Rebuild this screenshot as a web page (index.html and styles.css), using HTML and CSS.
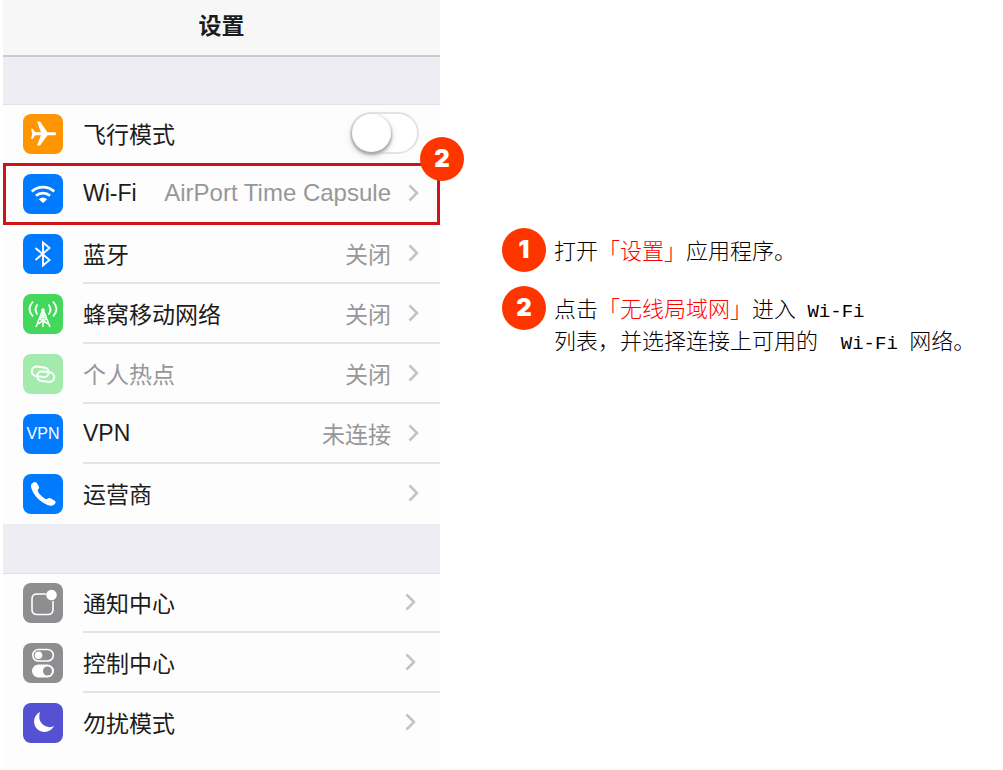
FILE: index.html
```html
<!DOCTYPE html>
<html lang="zh-CN">
<head>
<meta charset="utf-8">
<meta name="viewport" content="width=device-width, initial-scale=1">
<title>设置</title>
<link rel="stylesheet" href="styles.css">
</head>
<body>
<main class="page">
  <section class="phone">
    <header class="titlebar"><h1 class="title">设置</h1></header>
    <ul class="group">
      <li class="row">
        <svg class="icon orange" viewBox="0 0 40 40" aria-hidden="true"><path fill="#fff" d="M32.500 18.300H24.500L17 7.500H14L18 18.300H12.200L9.800 14.800H8L9.200 19.700L8 24.800H9.800L12.200 21.300H18L14 31.500H17L24.500 21.300H32.500Q34 19.800 32.500 18.300Z"/></svg>
        <div class="cell plain">
          <label class="name" for="airplane">飞行模式</label>
          <input class="toggle" type="checkbox" role="switch" id="airplane">
        </div>
      </li>
      <li class="row marked">
        <svg class="icon blue" viewBox="0 0 40 40" aria-hidden="true"><g fill="none" stroke="#fff" stroke-width="2.800"><path d="M8.800 17.600A16 16 0 0 1 31.200 17.600"/><path d="M13 21.700A10.500 10.500 0 0 1 27 21.700"/></g><path fill="#fff" d="M15.800 25.200Q20 22 24.200 25.200L20 29Z"/></svg>
        <a class="cell plain" href="#wifi">
          <span class="name">Wi-Fi</span><span class="value latin">AirPort Time Capsule</span>
          <svg class="chevron" viewBox="0 0 11 18" aria-hidden="true"><path d="M1.500 1.500L9 9L1.500 16.500"/></svg>
        </a>
        <span class="badge pinned">2</span>
      </li>
      <li class="row">
        <svg class="icon blue" viewBox="0 0 40 40" aria-hidden="true"><path fill="none" stroke="#fff" stroke-width="1.900" d="M12.500 14L26.500 26L20 31.500V8.500L26.500 14L12.500 26"/></svg>
        <a class="cell" href="#bluetooth">
          <span class="name">蓝牙</span><span class="value">关闭</span>
          <svg class="chevron" viewBox="0 0 11 18" aria-hidden="true"><path d="M1.500 1.500L9 9L1.500 16.500"/></svg>
        </a>
      </li>
      <li class="row">
        <svg class="icon green" viewBox="0 0 40 40" aria-hidden="true"><g fill="none" stroke="#fff" stroke-width="1.500"><path d="M20 15L13 33M20 15L27 33M18 20.500L23.500 25L14.500 30M22 20.500L16.500 25L25.500 30M20 15V33"/><path d="M14.500 10.500Q10.500 15.500 14.500 20.500M25.500 10.500Q29.500 15.500 25.500 20.500" stroke-width="1.800"/><path d="M10 7.500Q3 15 10 22.500M30 7.500Q37 15 30 22.500" stroke-width="1.800"/></g><circle cx="20" cy="16" r="1.800" fill="#fff"/></svg>
        <a class="cell" href="#cellular">
          <span class="name">蜂窝移动网络</span><span class="value">关闭</span>
          <svg class="chevron" viewBox="0 0 11 18" aria-hidden="true"><path d="M1.500 1.500L9 9L1.500 16.500"/></svg>
        </a>
      </li>
      <li class="row">
        <svg class="icon pale" viewBox="0 0 40 40" aria-hidden="true"><g fill="none" stroke="#f4fff5" stroke-width="2.200" transform="rotate(8 20 20)"><rect x="8.500" y="13.500" width="17" height="9.500" rx="4.750"/><rect x="14.500" y="17.500" width="17" height="9.500" rx="4.750"/></g></svg>
        <a class="cell" href="#hotspot">
          <span class="name dim">个人热点</span><span class="value">关闭</span>
          <svg class="chevron" viewBox="0 0 11 18" aria-hidden="true"><path d="M1.500 1.500L9 9L1.500 16.500"/></svg>
        </a>
      </li>
      <li class="row">
        <span class="icon blue vpn">VPN</span>
        <a class="cell" href="#vpn">
          <span class="name">VPN</span><span class="value">未连接</span>
          <svg class="chevron" viewBox="0 0 11 18" aria-hidden="true"><path d="M1.500 1.500L9 9L1.500 16.500"/></svg>
        </a>
      </li>
      <li class="row">
        <svg class="icon blue" viewBox="0 0 40 40" aria-hidden="true"><path fill="#fff" d="M9 9.500Q11.500 6.700 13.800 9L16 12.700Q16.700 14.300 14.800 16Q14.300 18 18.300 21.700Q22.300 25.400 24.200 25Q25.800 23.500 27.500 24.300L31.800 26.800Q33.700 28.300 31.300 30.600Q28.800 32.800 24.500 31Q17.500 28 12.500 22Q8 15.800 8 11.500Q8 10.500 9 9.500Z"/></svg>
        <a class="cell" href="#carrier">
          <span class="name">运营商</span>
          <svg class="chevron" viewBox="0 0 11 18" aria-hidden="true"><path d="M1.500 1.500L9 9L1.500 16.500"/></svg>
        </a>
      </li>
    </ul>
    <ul class="group second">
      <li class="row">
        <svg class="icon gray" viewBox="0 0 40 40" aria-hidden="true"><path fill="none" stroke="#fff" stroke-width="1.600" d="M23 11H14Q9 11 9 16V26.500Q9 31.500 14 31.500H25Q30 31.500 30 26.500V18"/><circle cx="28.500" cy="12" r="5.300" fill="#fff"/></svg>
        <a class="cell" href="#notifications">
          <span class="name">通知中心</span>
          <svg class="chevron" viewBox="0 0 11 18" aria-hidden="true"><path d="M1.500 1.500L9 9L1.500 16.500"/></svg>
        </a>
      </li>
      <li class="row">
        <svg class="icon gray" viewBox="0 0 40 40" aria-hidden="true"><rect x="9.800" y="6.500" width="20.500" height="11.500" rx="5.750" fill="none" stroke="#fff" stroke-width="1.600"/><circle cx="15.500" cy="12.200" r="3.800" fill="#fff"/><rect x="9" y="21.500" width="22" height="13" rx="6.500" fill="#fff"/><circle cx="24.500" cy="28" r="4.500" fill="#8e8e93"/></svg>
        <a class="cell" href="#control">
          <span class="name">控制中心</span>
          <svg class="chevron" viewBox="0 0 11 18" aria-hidden="true"><path d="M1.500 1.500L9 9L1.500 16.500"/></svg>
        </a>
      </li>
      <li class="row">
        <svg class="icon purple" viewBox="0 0 40 40" aria-hidden="true"><path fill="#fff" d="M17 9A10.500 10.500 0 1 0 31 23Q24.500 26 19.500 21.300Q14.500 16 17 9Z"/></svg>
        <a class="cell" href="#dnd">
          <span class="name">勿扰模式</span>
          <svg class="chevron" viewBox="0 0 11 18" aria-hidden="true"><path d="M1.500 1.500L9 9L1.500 16.500"/></svg>
        </a>
      </li>
    </ul>
  </section>
  <section class="steps">
    <div class="step"><span class="badge">1</span><p class="text">打开<em class="key">「设置」</em>应用程序。</p></div>
    <div class="step"><span class="badge">2</span><p class="text">点击<em class="key">「无线局域网」</em>进入<span class="mono"> Wi-Fi</span><br>列表，并选择连接上可用的<span class="mono">&nbsp; Wi-Fi </span>网络。</p></div>
  </section>
</main>
</body>
</html>
```
FILE: styles.css
```css
* { box-sizing: border-box; }

body {
  margin: 0;
  background: #fff;
  color: #1c1c1c;
  font-family: "Liberation Sans", "Noto Sans CJK SC", sans-serif;
  font-size: 23px;
}

.page {
  display: grid;
  grid-template-columns: minmax(0, 437px) minmax(0, 1fr);
  column-gap: 62px;
  min-height: 100vh;
  padding-left: 3px;
}

.phone { background: #fdfdfd; }

.titlebar {
  height: 57px;
  background: #f7f7f7;
  border-bottom: 2px solid #cbcbcf;
  text-align: center;
}

.title {
  margin: 0;
  font-size: 23px;
  line-height: 53px;
}

.group {
  margin: 0;
  padding: 0;
  list-style: none;
  border-top: 47px solid #eeedf3;
}

.second { border-top-width: 49px; }

.row {
  position: relative;
  display: flex;
  align-items: center;
  gap: 20px;
  height: 60px;
  padding-left: 20px;
}

.group .row:first-child { box-shadow: inset 0 1px #e0e0e4; }

.icon {
  flex: none;
  width: 40px;
  height: 40px;
  border-radius: 8px;
}

.orange { background: #ff9500; }
.blue { background: #007aff; }
.green { background: #43d85c; }
.pale { background: #a3eaad; }
.gray { background: #8e8e91; }
.purple { background: #5551d3; }

.vpn {
  color: #fff;
  font-size: 16px;
  line-height: 40px;
  text-align: center;
}

.cell {
  flex: 1;
  display: flex;
  align-items: center;
  height: 60px;
  padding-right: 21px;
  border-bottom: 2px solid #e4e4e6;
  color: inherit;
  text-decoration: none;
}

.second .cell { padding-right: 24px; }
.cell.plain, .row:last-child .cell { border-bottom-color: transparent; }

.name { flex: 1; white-space: nowrap; }
.dim, .value { color: #97979a; }
.value { white-space: nowrap; }
.latin { font-size: 24px; }

.chevron {
  flex: none;
  width: 11px;
  height: 18px;
  margin-left: 17px;
  fill: none;
  stroke: #c3c3c6;
  stroke-width: 2.5;
}

.toggle {
  appearance: none;
  width: 69px;
  height: 42px;
  margin: 0;
  border: 2px solid #e3e3e3;
  border-radius: 21px;
  background: #fff;
}

.toggle::before {
  content: "";
  display: block;
  width: 39px;
  height: 38px;
  border-radius: 50%;
  background: #fff;
  box-shadow: 0 2px 3px 1px #a8a8a8, 0 4px 10px #e4e4e4;
}

.marked::after {
  content: "";
  position: absolute;
  inset: -1px 0;
  border: 3px solid #cd141b;
  pointer-events: none;
}

.badge {
  flex: none;
  width: 44px;
  height: 44px;
  border-radius: 50%;
  background: #ff3500;
  color: #fff;
  font-family: Inter, sans-serif;
  font-size: 24px;
  font-weight: 900;
  line-height: 44px;
  text-align: center;
}

.pinned {
  position: absolute;
  z-index: 1;
  top: -27px;
  right: -24px;
}

.steps {
  display: flex;
  flex-direction: column;
  gap: 14px;
  padding-top: 228px;
}

.step { display: flex; gap: 8px; }

.text {
  margin: 0;
  padding-top: 5px;
  color: #000;
  font-family: "Noto Sans CJK SC", sans-serif;
  font-size: 22px;
  font-weight: 300;
  line-height: 32px;
}

.key { color: #f00; font-style: normal; }

.mono {
  font-family: "Liberation Mono", monospace;
  font-size: 19px;
  line-height: 20px;
}
```
